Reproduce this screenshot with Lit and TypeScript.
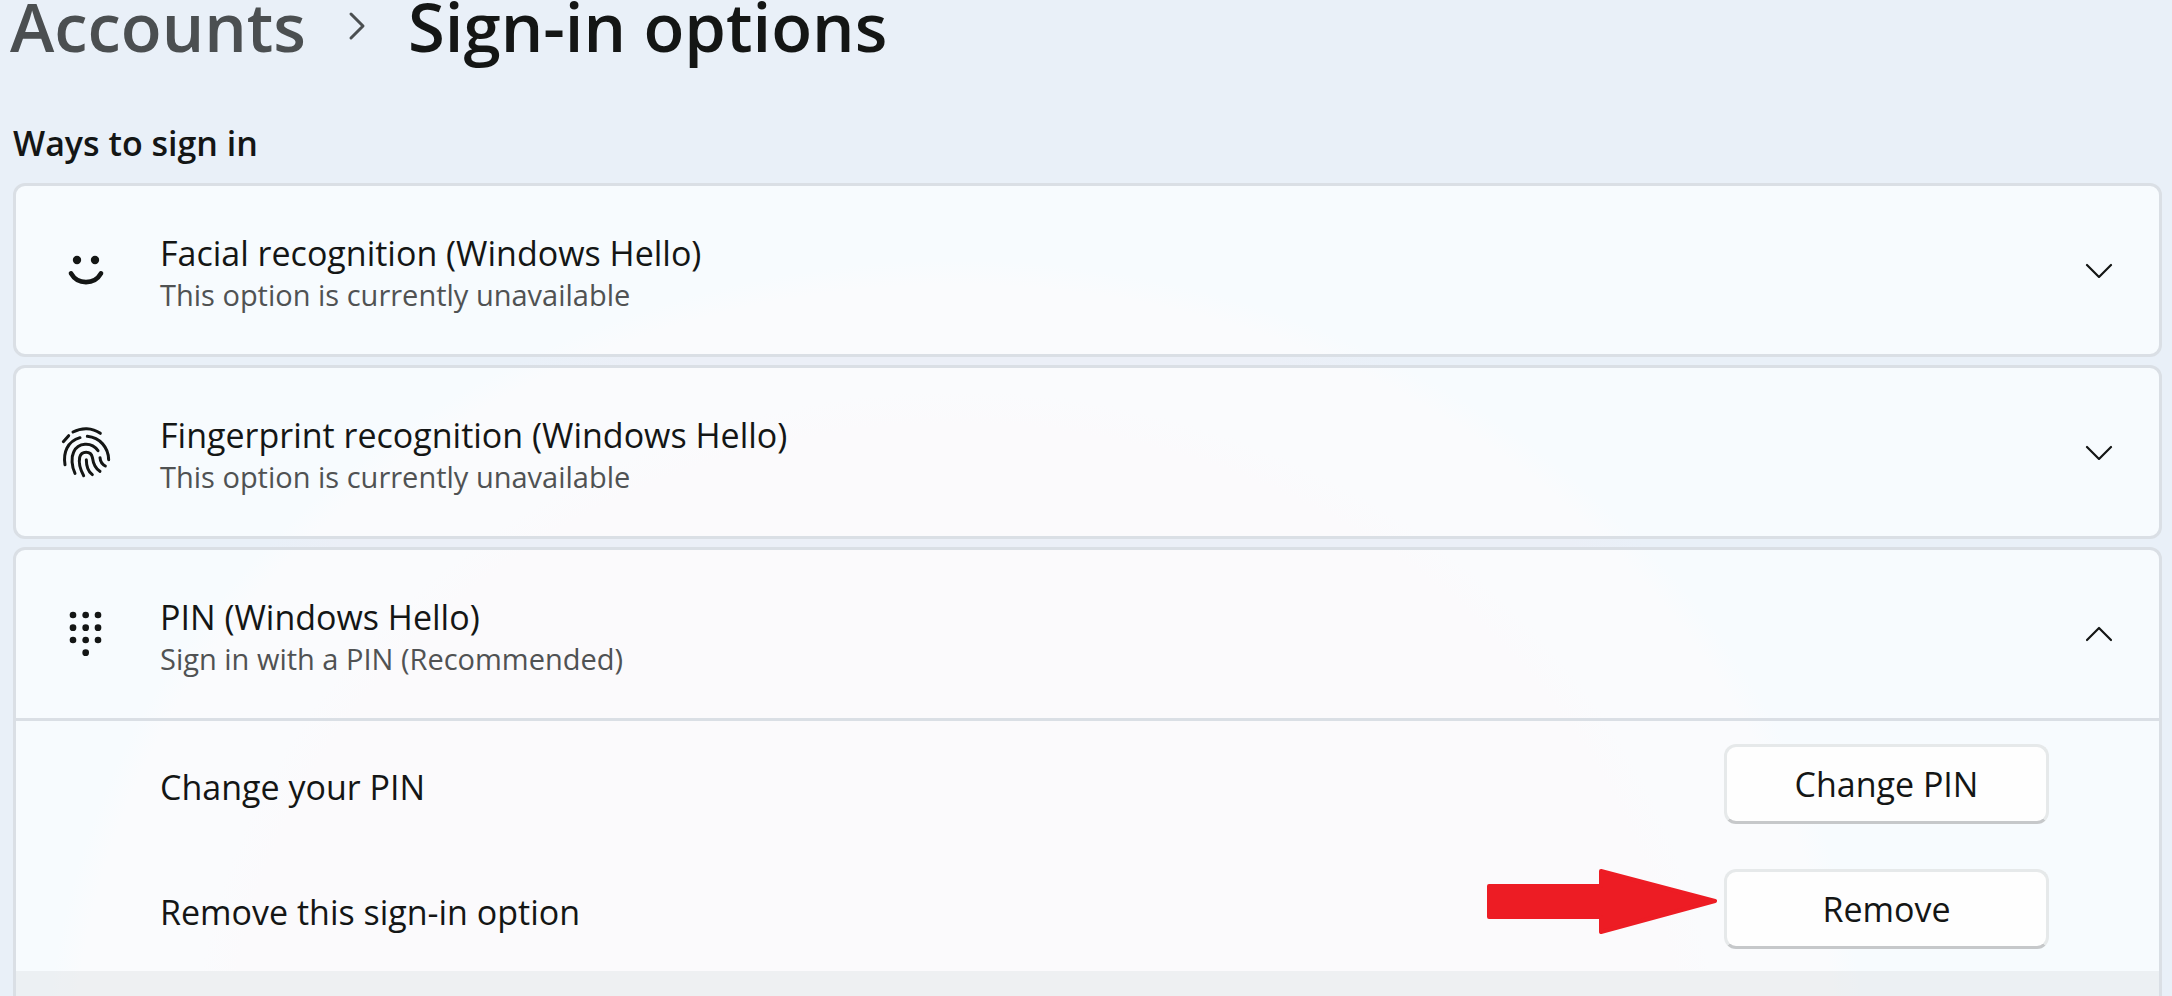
import { LitElement, html, svg, css, nothing } from "lit";
import { customElement, property } from "lit/decorators.js";

const icons = {
  face: svg`<svg class="icon" viewBox="0 0 270 240" aria-hidden="true">
    <circle cx="111" cy="90" r="12.5" /><circle cx="165" cy="90" r="12.5" />
    <path class="line" stroke-width="14" d="M93 130 C113 165 163 165 183 130" />
  </svg>`,
  finger: svg`<svg class="icon" viewBox="0 6 270 240" aria-hidden="true">
    <g class="line" stroke-width="9">
      <path d="M99 66 C125 52 156 52 181 70" />
      <path d="M70 95 L86 77" />
      <path d="M75 164 C69 128 82 94 120 83" />
      <path d="M142 79 C180 83 205 112 206 149" />
      <path d="M105 190 C95 170 93 142 101 126 C114 98 154 94 174 122" />
      <path d="M131 197 C119 175 116 156 119 142 C124 122 153 122 157 142 C160 162 165 176 180 184" />
      <path d="M180 143 C181 155 186 163 196 168" />
      <path d="M139 149 C139 170 145 185 157 194" />
    </g>
  </svg>`,
  pin: svg`<svg class="icon" viewBox="0 12 270 240" aria-hidden="true">
    ${[75, 113, 150].map((y) => [99, 137, 174].map((x) => svg`<circle cx=${x} cy=${y} r="10" />`))}
    <circle cx="137" cy="188" r="10" />
  </svg>`,
};

type IconName = keyof typeof icons;

@customElement("sign-in-card")
class SignInCard extends LitElement {
  @property() icon: IconName = "face";
  @property() heading = "";
  @property() note = "";
  @property({ type: Boolean, reflect: true }) open = false;

  static styles = css`
    :host {
      display: block;
      border: 3px solid #dadfe5;
      border-radius: 12px;
      background: radial-gradient(ellipse 910px 820px at 44% 1080px, #fbfafc 0 80%, #fafbfd 84% 97%, #f7fbfe 100%) fixed;
      overflow: hidden;
    }
    .header {
      display: flex;
      align-items: center;
      gap: 30px;
      width: 100%;
      height: 168px;
      padding: 0 46px 0 24px;
      border: 0;
      background: none;
      color: inherit;
      font: inherit;
      text-align: left;
    }
    .icon {
      flex: none;
      width: 90px;
      height: 80px;
      fill: #141615;
    }
    .line {
      fill: none;
      stroke: #141615;
      stroke-linecap: round;
      stroke-linejoin: round;
    }
    .text {
      flex: 1;
      display: flex;
      flex-direction: column;
      padding-top: 6px;
    }
    .heading {
      line-height: 44px;
    }
    .note {
      font-size: 29px;
      line-height: 40px;
      color: #505253;
    }
    .chevron {
      flex: none;
      width: 28px;
      height: 16px;
    }
    .body {
      border-top: 3px solid #dadfe5;
    }
  `;

  render() {
    return html`
      <button class="header" aria-expanded=${this.open ? "true" : "false"} @click=${() => (this.open = !this.open)}>
        ${icons[this.icon]}
        <span class="text">
          <span class="heading">${this.heading}</span>
          <span class="note">${this.note}</span>
        </span>
        <svg class="chevron" viewBox="0 0 28 16" aria-hidden="true">
          <path class="line" stroke-width="2.2" d=${this.open ? "M2 14 L14 2 L26 14" : "M2 3 L14 15 L26 3"} />
        </svg>
      </button>
      ${this.open ? html`<div class="body"><slot></slot></div>` : nothing}
    `;
  }
}

@customElement("app-root")
class AppRoot extends LitElement {
  static styles = css`
    :host {
      display: block;
      box-sizing: border-box;
      height: 100vh;
      overflow: hidden;
      padding: 0 10px;
      background: radial-gradient(ellipse 910px 820px at 44% 1080px, #ebeff7 0 94%, #e9f0f8 100%) #e9f0f8;
      color: #141615;
      font-family: "Segoe UI", "Open Sans", "Noto Sans", sans-serif;
      font-size: 34px;
    }
    .crumbs {
      display: flex;
      align-items: center;
      height: 52px;
      font-size: 67px;
      line-height: 52px;
      font-weight: 600;
    }
    .crumbs a {
      color: #4b4f51;
      text-decoration: none;
    }
    .crumbs svg {
      width: 18px;
      height: 30px;
      margin: 0 42px;
      fill: none;
      stroke: #4b4f51;
      stroke-width: 3;
      stroke-linecap: round;
      stroke-linejoin: round;
    }
    h1,
    h2 {
      margin: 0;
      font-weight: 600;
    }
    h1 {
      font-size: inherit;
    }
    section {
      padding-left: 3px;
    }
    h2 {
      margin: 68px 0 17px;
      font-size: 34px;
      line-height: 46px;
    }
    .cards {
      display: flex;
      flex-direction: column;
      gap: 8px;
    }
    .row {
      position: relative;
      display: flex;
      align-items: center;
      justify-content: space-between;
      height: 125px;
      padding: 0 110px 0 144px;
    }
    .row span {
      padding-top: 6px;
    }
    .row button {
      box-sizing: border-box;
      width: 325px;
      height: 80px;
      padding: 0;
      border: 3px solid #e6e9ea;
      border-bottom-color: #c6c8ca;
      border-radius: 12px;
      background: #fefefe;
      color: inherit;
      font: inherit;
    }
    .arrow {
      position: absolute;
      top: 23px;
      right: 442px;
      width: 230px;
      height: 65px;
      fill: #ed1c24;
      stroke: #ed1c24;
      stroke-width: 4;
      stroke-linejoin: round;
    }
    .more {
      height: 60px;
      background: rgba(226, 229, 231, 0.5);
    }
  `;

  render() {
    return html`
      <nav class="crumbs" aria-label="Breadcrumb">
        <a href="#accounts">Accounts</a>
        <svg viewBox="0 0 18 30" aria-hidden="true"><path d="M3 3 L15 15 L3 27" /></svg>
        <h1>Sign-in options</h1>
      </nav>
      <section>
        <h2>Ways to sign in</h2>
        <div class="cards">
          <sign-in-card icon="face" heading="Facial recognition (Windows Hello)" note="This option is currently unavailable"></sign-in-card>
          <sign-in-card icon="finger" heading="Fingerprint recognition (Windows Hello)" note="This option is currently unavailable"></sign-in-card>
          <sign-in-card icon="pin" heading="PIN (Windows Hello)" note="Sign in with a PIN (Recommended)" open>
            <div class="row">
              <span id="change">Change your PIN</span>
              <button aria-describedby="change">Change PIN</button>
            </div>
            <div class="row">
              <span id="remove">Remove this sign-in option</span>
              <svg class="arrow" viewBox="0 0 230 65" aria-hidden="true">
                <path d="M2 17 H114 V2 L228 32 L114 63 V48 H2 Z" />
              </svg>
              <button aria-describedby="remove">Remove</button>
            </div>
            <div class="more"></div>
          </sign-in-card>
        </div>
      </section>
    `;
  }
}
